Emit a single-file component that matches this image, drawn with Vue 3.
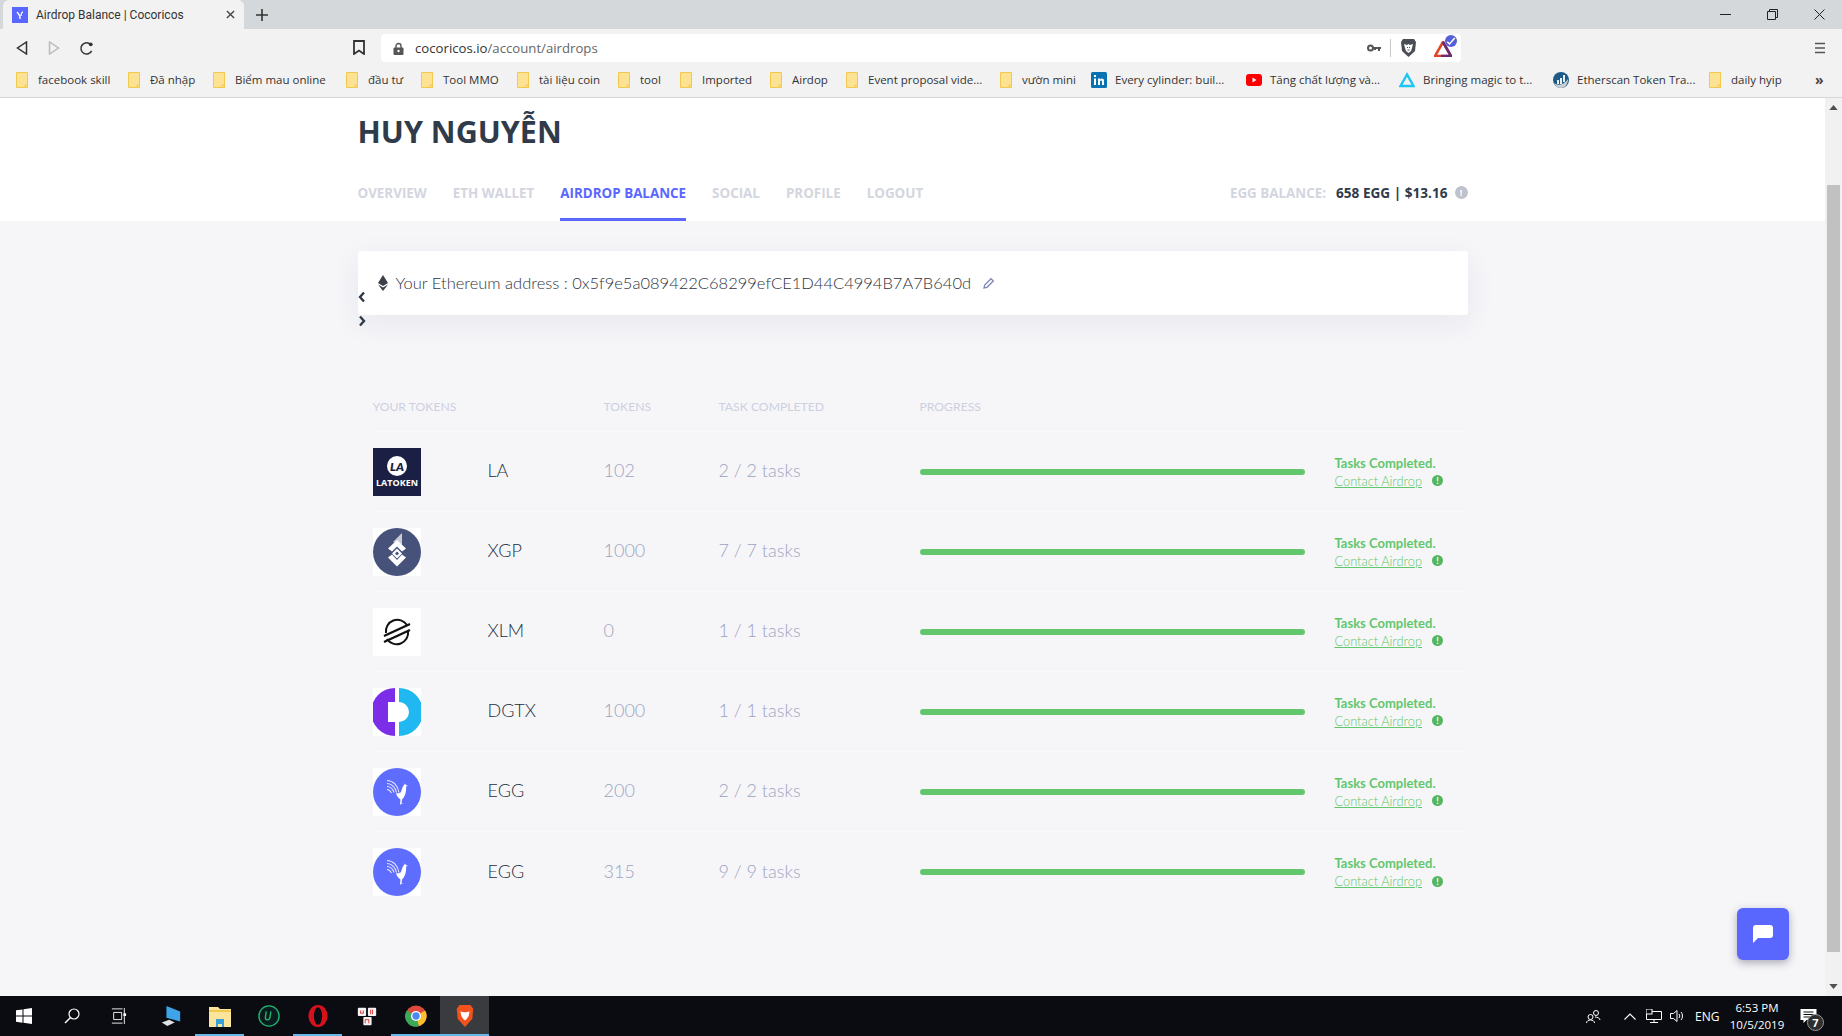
<script setup>
const bookmarks = [
  { label: 'facebook skill', width: 112 },
  { label: 'Đã nhập', width: 85 },
  { label: 'Biểm mau online', width: 133 },
  { label: 'đầu tư', width: 75 },
  { label: 'Tool MMO', width: 96 },
  { label: 'tài liệu coin', width: 101 },
  { label: 'tool', width: 62 },
  { label: 'Imported', width: 90 },
  { label: 'Airdop', width: 76 },
  { label: 'Event proposal vide...', width: 154 },
  { label: 'vườn mini', width: 91 },
  { label: 'Every cylinder: buil...', width: 155, icon: 'in' },
  { label: 'Tăng chất lượng và...', width: 153, icon: 'yt' },
  { label: 'Bringing magic to t...', width: 154, icon: 'tri' },
  { label: 'Etherscan Token Tra...', width: 156, icon: 'eth' },
  { label: 'daily hyip', width: 90 }
]

const tabs = [
  { label: 'OVERVIEW' },
  { label: 'ETH WALLET' },
  { label: 'AIRDROP BALANCE', active: true },
  { label: 'SOCIAL' },
  { label: 'PROFILE' },
  { label: 'LOGOUT' }
]

const rows = [
  { logo: 'la', name: 'LA', tokens: '102', tasks: '2 / 2 tasks' },
  { logo: 'xgp', name: 'XGP', tokens: '1000', tasks: '7 / 7 tasks' },
  { logo: 'xlm', name: 'XLM', tokens: '0', tasks: '1 / 1 tasks' },
  { logo: 'dgtx', name: 'DGTX', tokens: '1000', tasks: '1 / 1 tasks' },
  { logo: 'egg', name: 'EGG', tokens: '200', tasks: '2 / 2 tasks' },
  { logo: 'egg', name: 'EGG', tokens: '315', tasks: '9 / 9 tasks' }
]
</script>

<template>
  <div class="screen">
    <!-- tab strip -->
    <div class="tabstrip">
      <div class="tab">
        <svg class="favicon" viewBox="0 0 16 16">
          <rect width="16" height="16" fill="#5a67ff" />
          <path d="M5 5c1 1 2 2 3 5l0 2M11 5c-1 0-2 2-2 4" stroke="#fff" stroke-width="1.4" fill="none" />
        </svg>
        <span class="tab-title">Airdrop Balance | Cocoricos</span>
        <svg class="tab-close" viewBox="0 0 10 10"><path d="M1 1l8 8M9 1l-8 8" stroke="#444" stroke-width="1.5" /></svg>
      </div>
      <svg class="tab-plus" viewBox="0 0 12 12"><path d="M6 0v12M0 6h12" stroke="#333" stroke-width="1.6" /></svg>
      <div class="win-controls">
        <svg viewBox="0 0 11 11"><path d="M0 5.5h11" stroke="#222" /></svg>
        <svg viewBox="0 0 11 11"><path d="M.5 2.5h8v8h-8zM2.5 2.5v-2h8v8h-2" stroke="#222" fill="none" /></svg>
        <svg viewBox="0 0 11 11"><path d="M.5.5l10 10M10.5.5l-10 10" stroke="#222" /></svg>
      </div>
    </div>

    <!-- toolbar -->
    <div class="toolbar">
      <div class="nav-buttons">
        <svg viewBox="0 0 12 14"><path d="M10.5 1v12L1.5 7z" fill="none" stroke="#333" stroke-width="1.5" /></svg>
        <svg viewBox="0 0 12 14"><path d="M1.5 1v12L10.5 7z" fill="none" stroke="#bbb" stroke-width="1.5" /></svg>
        <svg viewBox="0 0 16 16"><path d="M13.5 10.5A6 6 0 1 1 11.5 3" fill="none" stroke="#333" stroke-width="1.6" /><circle cx="12.5" cy="3.5" r="2" fill="#333" /></svg>
      </div>
      <svg class="bookmark-btn" viewBox="0 0 12 15"><path d="M1 1h10v13L6 10.5 1 14z" fill="none" stroke="#333" stroke-width="1.8" /></svg>
      <div class="omnibox">
        <svg class="lock" viewBox="0 0 11 13"><path d="M3 6V4a2.5 2.5 0 0 1 5 0v2" fill="none" stroke="#555" stroke-width="1.4" /><rect x=".5" y="5.5" width="10" height="7.5" rx="1" fill="#555" /><circle cx="5.5" cy="9" r="1.2" fill="#fff" /></svg>
        <span class="url">cocoricos.io<span class="url-path">/account/airdrops</span></span>
        <svg class="key" viewBox="0 0 14 8"><circle cx="3.5" cy="4" r="2.5" fill="none" stroke="#555" stroke-width="2" /><path d="M6 3h8v2h-1v2h-2V5H9v1H7V5H6z" fill="#555" /></svg>
        <i class="omni-sep"></i>
        <svg class="shield" viewBox="0 0 17 20">
          <path d="M3 1h11l2 3-1 9-6.500 6L2 13 1 4z" fill="#4a4d55" />
          <path d="M4 6l3 1 1.500-1L10 7l3-1-1 4-1 3-2.500 2L6 13l-1-3z" fill="#fff" />
          <path d="M7 9.500h1M9 9.500h1M7.500 12h2" stroke="#4a4d55" stroke-width="1" />
        </svg>
        <div class="bat">
          <svg viewBox="0 0 18 16">
            <path d="M9 1 1 15h16z" fill="#fff" stroke="#e2452a" stroke-width="2.600" />
            <path d="M9 1l8 14H7" fill="none" stroke="#662d73" stroke-width="2.600" />
          </svg>
          <span class="bat-badge">
            <svg viewBox="0 0 8 8"><path d="M1.500 4.500 3 6l3.500-4" stroke="#fff" fill="none" /></svg>
          </span>
        </div>
      </div>
      <svg class="menu-btn" viewBox="0 0 10 12"><path d="M0 1.500h10M0 6h10M0 10.500h10" stroke="#555" stroke-width="1.500" /></svg>
    </div>

    <!-- bookmarks bar -->
    <div class="bookmarks">
      <div v-for="b in bookmarks" :key="b.label" class="bm" :style="{ width: b.width + 'px' }">
        <svg v-if="!b.icon" class="bm-icon" viewBox="0 0 12 16">
          <path d="M.5.500h11v15H.500z" fill="#fde293" stroke="#f2c94c" />
          <path d="M9 13h2.500v2.500H9z" fill="none" stroke="#f2c94c" />
        </svg>
        <svg v-else-if="b.icon === 'in'" class="bm-icon wide" viewBox="0 0 16 16">
          <rect width="16" height="16" rx="1.500" fill="#0a71b3" />
          <path d="M3 6.500h2V13H3zM3 3h2v2H3zM7 6.500h2v1c1-1.500 4-1.500 4 1.500v4h-2V9.500c0-1.500-2-1.500-2 0V13H7z" fill="#fff" />
        </svg>
        <svg v-else-if="b.icon === 'yt'" class="bm-icon wide" viewBox="0 0 16 16">
          <rect y="2" width="16" height="12" rx="3" fill="#f00" />
          <path d="M6.500 5.500v5l4-2.500z" fill="#fff" />
        </svg>
        <svg v-else-if="b.icon === 'tri'" class="bm-icon wide" viewBox="0 0 16 16">
          <path d="M8 2.500 1.500 14h13z" fill="none" stroke="#1cc6f4" stroke-width="2.400" />
        </svg>
        <svg v-else class="bm-icon wide" viewBox="0 0 16 16">
          <circle cx="8" cy="8" r="8" fill="#1d5a87" />
          <path d="M1 11c4 3 10 2 14-4 0 5-3 9-7 9-3 0-6-2-7-5z" fill="#c9ced3" />
          <path d="M5 8v4M8 6v6M11 3v7" stroke="#fff" stroke-width="1.800" />
        </svg>
        <span class="bm-label">{{ b.label }}</span>
      </div>
      <span class="bm-more">»</span>
    </div>

    <!-- page -->
    <div class="viewport">
      <div class="page">
        <header class="page-header">
          <div class="container">
            <h1>HUY NGUYỄN</h1>
            <div class="header-row">
              <nav class="tabs">
                <a v-for="t in tabs" :key="t.label" :class="{ active: t.active }">{{ t.label }}</a>
              </nav>
              <div class="balance">
                <span class="balance-label">EGG BALANCE:</span>
                <span class="balance-value">658 EGG | $13.16</span>
                <span class="info-dot">!</span>
              </div>
            </div>
          </div>
        </header>

        <main class="container">
          <div class="address-card">
            <svg class="eth-icon" viewBox="0 0 10 16">
              <path d="M5 0 0 8l5 3 5-3z" fill="#3c3f48" />
              <path d="M0 9.500 5 16l5-6.500-5 3z" fill="#3c3f48" />
            </svg>
            <span>Your Ethereum address : 0x5f9e5a089422C68299efCE1D44C4994B7A7B640d</span>
            <svg class="pencil" viewBox="0 0 12 12"><path d="M1 11l.7-3L8 1.700 10.300 4 4 10.300z" fill="none" stroke="#7d88b5" stroke-width="1.300" /></svg>
            <svg class="chev chev-prev" viewBox="0 0 8 12"><path d="M6 1.500 2 6l4 4.500" fill="none" stroke="#2f3a4a" stroke-width="2.400" /></svg>
            <svg class="chev chev-next" viewBox="0 0 8 12"><path d="M2 1.500 6 6l-4 4.500" fill="none" stroke="#2f3a4a" stroke-width="2.400" /></svg>
          </div>

          <div class="table">
            <div class="table-head grid">
              <span>YOUR TOKENS</span>
              <span></span>
              <span>TOKENS</span>
              <span>TASK COMPLETED</span>
              <span>PROGRESS</span>
              <span></span>
            </div>
            <div v-for="(r, i) in rows" :key="i" class="table-row grid">
              <div class="logo">
                <svg v-if="r.logo === 'la'" viewBox="0 0 48 48">
                  <rect width="48" height="48" fill="#1b1f43" />
                  <circle cx="24" cy="18" r="10" fill="#fff" />
                  <text x="24" y="22.500" text-anchor="middle" class="la-mark">LA</text>
                  <text x="24" y="37.500" text-anchor="middle" class="la-text">LATOKEN</text>
                </svg>
                <svg v-else-if="r.logo === 'xgp'" viewBox="0 0 48 48">
                  <rect width="48" height="48" fill="#fff" />
                  <circle cx="24" cy="24" r="24" fill="#46527a" />
                  <path d="M29 5v12l-9-3z" fill="#c9ccd6" />
                  <path d="M24 12l9 8.500-4 3-5-5-5 5-4-3z" fill="#fff" />
                  <path d="M24 20.500l5 5-5 5-5-5zM24 23.500l-2 2 2 2 2-2z" fill="#fff" fill-rule="evenodd" />
                  <path d="M15 29.500l4-3 5 5.500 5-5.500 4 3-9 9z" fill="#fff" />
                </svg>
                <svg v-else-if="r.logo === 'xlm'" viewBox="0 0 48 48">
                  <rect width="48" height="48" fill="#fff" />
                  <path d="M34 17a11.500 11.500 0 0 0-21 8M14 31a11.500 11.500 0 0 0 21-8" fill="none" stroke="#111" stroke-width="2" />
                  <path d="M11 28l26-12M11 34l26-12" stroke="#111" stroke-width="2.400" />
                </svg>
                <svg v-else-if="r.logo === 'dgtx'" viewBox="0 0 48 48">
                  <rect width="48" height="48" fill="#fff" />
                  <path d="M22 0v14h-7v20h7v14A24 24 0 0 1 22 0z" fill="#7b2de8" />
                  <path d="M26 0a24 24 0 0 1 0 48V34a10 10 0 0 0 0-20z" fill="#1fb8f0" />
                </svg>
                <svg v-else viewBox="0 0 48 48">
                  <rect width="48" height="48" fill="#fff" />
                  <circle cx="24" cy="24" r="24" fill="#5f6dff" />
                  <g fill="none" stroke="#fff" stroke-width="1.100" opacity=".85">
                    <path d="M14 12.500c6 0 11 5 12 12" />
                    <path d="M14 15.500c4.500 0 8.500 4 9.500 9" />
                    <path d="M14 18.500c3 0 6 2.500 7 6" />
                    <path d="M14 21.500c2 0 3.500 1.500 4.500 3.500" />
                  </g>
                  <path d="M23 25c2 .5 4 .5 5-1 1-2 1-5 3-7l1-1.500 1 1.500 2 1-2 .5c.5 4-.5 10-4 13l-.5 4h2l-3.500 1 .5-5c-2-1.500-4-3.500-4.500-6.500z" fill="#fff" />
                </svg>
              </div>
              <span class="token-name">{{ r.name }}</span>
              <span class="token-num">{{ r.tokens }}</span>
              <span class="token-num">{{ r.tasks }}</span>
              <div class="progress"><i></i></div>
              <div class="status">
                <strong>Tasks Completed.</strong>
                <div class="contact"><a>Contact Airdrop</a><span class="ok-dot">!</span></div>
              </div>
            </div>
          </div>
        </main>
      </div>

      <div class="scrollbar">
        <svg viewBox="0 0 10 6"><path d="M5 0l5 6H0z" fill="#505050" /></svg>
        <div class="scroll-track"><div class="scroll-thumb"></div></div>
        <svg viewBox="0 0 10 6"><path d="M5 6l5-6H0z" fill="#505050" /></svg>
      </div>

      <button class="chat">
        <svg viewBox="0 0 20 18"><path d="M3 0h14a3 3 0 0 1 3 3v7a3 3 0 0 1-3 3H5l-5 5V3a3 3 0 0 1 3-3z" fill="#fff" /></svg>
      </button>
    </div>

    <!-- taskbar -->
    <footer class="taskbar">
      <div class="task-slot sys">
        <svg viewBox="0 0 16 16"><path d="M0 2.300 6.500 1.400v6.200H0zM7.500 1.300 16 0v7.600H7.500zM0 8.500h6.500v6.200L0 13.800zM7.500 8.500H16V16l-8.500-1.200z" fill="#fff" /></svg>
      </div>
      <div class="task-slot sys">
        <svg viewBox="0 0 16 16"><circle cx="10" cy="6" r="5" fill="none" stroke="#fff" stroke-width="1.200" /><path d="M6.500 9.500 1 15" stroke="#fff" stroke-width="1.500" /></svg>
      </div>
      <div class="task-slot sys">
        <svg viewBox="0 0 16 18"><path d="M0 1h12M0 17h12M2 5h9v8H2zM14 0v18" stroke="#fff" fill="none" /><rect x="13" y="6" width="3" height="3" fill="#fff" /></svg>
      </div>
      <div class="task-slot app">
        <svg viewBox="0 0 24 24"><path d="M7 1l15 6v11L7 14z" fill="#3ea3e8" /><path d="M2 19l8-3 6 3-8 4z" fill="#dfe3e8" /></svg>
      </div>
      <div class="task-slot app running">
        <svg viewBox="0 0 22 22"><path d="M0 2h9l2 2h11v18H0z" fill="#fbe59a" /><path d="M0 5h22v2H0z" fill="#f0c94e" /><path d="M7 14h8v8h-2v-3H9v3H7z" fill="#3aa0da" /></svg>
      </div>
      <div class="task-slot app">
        <svg viewBox="0 0 24 24"><circle cx="12" cy="12" r="11" fill="#0b1a1c" stroke="#21b573" stroke-width="1.500" /><path d="M9 7l-1 7c0 3 4 3 5 0l1-7" fill="none" stroke="#21b573" stroke-width="1.500" /></svg>
      </div>
      <div class="task-slot app running">
        <svg viewBox="0 0 24 24"><ellipse cx="12" cy="12" rx="10.500" ry="12" fill="#d7111e" /><ellipse cx="12" cy="12" rx="4.500" ry="9.500" fill="#0a0c11" /></svg>
      </div>
      <div class="task-slot app">
        <svg viewBox="0 0 24 24">
          <rect x="2" y="3" width="9" height="9" rx="1" fill="#f3f3f3" /><rect x="13" y="3" width="9" height="9" rx="1" fill="#f3f3f3" /><rect x="8" y="13" width="9" height="9" rx="1" fill="#f3f3f3" />
          <path d="M5 6v3h3V6M16 5v5M18 5v5M10 20v-4h4v4" stroke="#d33" fill="none" />
        </svg>
      </div>
      <div class="task-slot app running">
        <svg viewBox="0 0 24 24">
          <circle cx="12" cy="12" r="11.500" fill="#de4b3e" />
          <path d="M12 12 22 6a11.500 11.500 0 0 1-7 17z" fill="#fbc02d" />
          <path d="M12 12 15 23.200A11.500 11.500 0 0 1 2 6z" fill="#3ba958" />
          <circle cx="12" cy="12" r="5.500" fill="#fff" /><circle cx="12" cy="12" r="4" fill="#4a8af0" />
        </svg>
      </div>
      <div class="task-slot app active">
        <svg viewBox="0 0 20 24">
          <path d="M4 0h12l3 4-1 11-8 9-8-9L1 4z" fill="#f1531f" />
          <path d="M5 7l4 1h2l4-1-1 5-2 3-2 2-2-2-2-3z" fill="#fff" />
        </svg>
      </div>

      <div class="tray">
        <svg class="t-people" viewBox="0 0 15 15"><circle cx="10" cy="4" r="2.500" fill="none" stroke="#fff" /><circle cx="4.500" cy="8" r="2.500" fill="none" stroke="#fff" /><path d="M.5 14c0-2 2-3 4-3s4 1 4 3M9 8c2 0 5 1 5 3" fill="none" stroke="#fff" /></svg>
        <svg class="t-chevron" viewBox="0 0 12 7"><path d="M.5 6.500 6 1l5.500 5.500" fill="none" stroke="#fff" stroke-width="1.200" /></svg>
        <svg class="t-net" viewBox="0 0 16 14"><path d="M.5 2.500h15v8H.5zM8 10.500V13M4 13.500h8" fill="none" stroke="#fff" /><rect y="0" width="6" height="5" fill="#0a0c11" stroke="#fff" /></svg>
        <svg class="t-vol" viewBox="0 0 15 14"><path d="M.5 4.500h3L7 1.500v11l-3.500-3h-3z" fill="none" stroke="#fff" /><path d="M9 5a3 3 0 0 1 0 4M11 3a6 6 0 0 1 0 8" fill="none" stroke="#fff" /></svg>
        <span class="t-lang">ENG</span>
        <div class="t-clock"><span>6:53 PM</span><span>10/5/2019</span></div>
        <div class="t-notify">
          <svg viewBox="0 0 16 14"><path d="M0 0h16v11H6l-3 3v-3H0z" fill="#fff" /><path d="M3 3h10M3 5.500h10M3 8h10" stroke="#0a0c11" /></svg>
          <span class="t-badge">7</span>
        </div>
      </div>
    </footer>
  </div>
</template>

<style scoped>
.screen {
  width: 1842px;
  height: 1036px;
  display: flex;
  flex-direction: column;
  overflow: hidden;
  font-family: Lato, sans-serif;
}

/* browser chrome */
.tabstrip {
  height: 29px;
  background: #d5d8db;
  display: flex;
  align-items: flex-end;
  padding-left: 3px;
  flex-shrink: 0;
}
.tab {
  width: 241px;
  height: 29px;
  background: #f2f2f2;
  border-radius: 6px 6px 0 0;
  display: flex;
  align-items: center;
  padding-left: 9px;
  box-sizing: border-box;
}
.favicon {
  width: 16px;
  height: 16px;
}
.tab-title {
  margin-left: 8px;
  font: 12px Roboto, sans-serif;
  color: #333;
  width: 190px;
  white-space: nowrap;
}
.tab-close {
  width: 9px;
  height: 9px;
}
.tab-plus {
  width: 12px;
  height: 12px;
  margin: 0 0 8px 12px;
}
.win-controls {
  margin-left: auto;
  display: flex;
  gap: 36px;
  padding-right: 17px;
  height: 29px;
  align-items: center;
}
.win-controls svg {
  width: 11px;
  height: 11px;
}
.toolbar {
  height: 33px;
  background: #f2f2f2;
  display: flex;
  align-items: flex-end;
  flex-shrink: 0;
}
.nav-buttons {
  display: flex;
  align-items: center;
  gap: 20px;
  width: 353px;
  height: 28px;
  padding-left: 16px;
  box-sizing: border-box;
}
.nav-buttons svg {
  width: 12px;
  height: 14px;
}
.nav-buttons svg:last-child {
  width: 15px;
  height: 15px;
  margin-left: -1px;
}
.bookmark-btn {
  width: 12px;
  height: 15px;
  margin: 0 16px 7px 0;
}
.omnibox {
  width: 1080px;
  height: 28px;
  background: #fff;
  border-radius: 4px;
  display: flex;
  align-items: center;
  position: relative;
}
.lock {
  width: 11px;
  height: 13px;
  margin-left: 12px;
}
.url {
  margin-left: 11px;
  font: 13.2px "Open Sans", sans-serif;
  color: #333;
}
.url-path {
  color: #666;
}
.key {
  width: 14px;
  height: 8px;
  margin-left: auto;
}
.omni-sep {
  width: 1px;
  height: 18px;
  background: #c8c8c8;
  margin: 0 9px;
}
.shield {
  width: 17px;
  height: 20px;
}
.bat {
  position: relative;
  width: 18px;
  height: 16px;
  margin: 2px 9px 0 17px;
}
.bat svg {
  width: 18px;
  height: 16px;
  display: block;
}
.bat-badge {
  position: absolute;
  left: 11px;
  top: -6px;
  width: 12px;
  height: 12px;
  border-radius: 50%;
  background: #5560d8;
}
.bat-badge svg {
  width: 12px;
  height: 12px;
}
.menu-btn {
  width: 10px;
  height: 12px;
  margin: 0 0 8px 354px;
}
.bookmarks {
  height: 36px;
  background: #f2f2f2;
  border-bottom: 1px solid #d5d8db;
  box-sizing: border-box;
  display: flex;
  align-items: center;
  padding-left: 16px;
  flex-shrink: 0;
}
.bm {
  display: flex;
  align-items: center;
  flex-shrink: 0;
  white-space: nowrap;
}
.bm-icon {
  width: 12px;
  height: 16px;
  margin-right: 10px;
  flex-shrink: 0;
}
.bm-icon.wide {
  width: 16px;
  margin-right: 8px;
}
.bm-label {
  font: 11.5px "Open Sans", sans-serif;
  color: #333;
}
.bm-more {
  margin-left: 16px;
  font: bold 14px "Open Sans", sans-serif;
  color: #444;
}

/* page */
.viewport {
  flex: 1;
  min-height: 0;
  display: flex;
  position: relative;
  background: #f6f6f9;
}
.page {
  flex: 1;
  min-width: 0;
}
.container {
  width: 1110px;
  margin: 0 auto;
  display: block;
}
.page-header {
  height: 123px;
  background: #fff;
}
h1 {
  margin: 0;
  padding-top: 13px;
  height: 62px;
  box-sizing: border-box;
  font: 700 30.5px/40px "Open Sans", sans-serif;
  color: #2f3a4a;
}
.header-row {
  display: flex;
  justify-content: space-between;
  height: 61px;
}
.tabs {
  display: flex;
  gap: 26px;
}
.tabs a {
  height: 61px;
  box-sizing: border-box;
  padding-top: 24px;
  font: 700 13.4px/18px "Open Sans", sans-serif;
  color: #d3d6de;
}
.tabs a.active {
  color: #5a67ff;
  border-bottom: 3px solid #5a67ff;
}
.balance {
  display: flex;
  align-items: flex-start;
  padding-top: 24px;
  font: 700 13.4px/18px "Open Sans", sans-serif;
}
.balance-label {
  color: #d3d6de;
}
.balance-value {
  color: #2f3a4a;
  margin-left: 10px;
  font-size: 13.6px;
}
.info-dot {
  width: 13px;
  height: 13px;
  border-radius: 50%;
  background: #bfc2cc;
  color: #fff;
  font-size: 9px;
  line-height: 13px;
  text-align: center;
  margin: 2px 0 0 7px;
}
.address-card {
  position: relative;
  margin-top: 30px;
  height: 64px;
  background: #fff;
  border-radius: 3px;
  box-shadow: 0 8px 30px rgba(40, 40, 80, 0.07);
  display: flex;
  align-items: center;
  padding-left: 20px;
  font-size: 16.5px;
  font-weight: 300;
  color: #2f3442;
}
.eth-icon {
  width: 10px;
  height: 16px;
  margin-right: 8px;
}
.pencil {
  width: 12px;
  height: 12px;
  margin-left: 12px;
}
.chev {
  position: absolute;
  left: 0;
  width: 8px;
  height: 12px;
}
.chev-prev {
  top: 40px;
}
.chev-next {
  top: 64px;
}
.table {
  margin-top: 67px;
  padding-left: 15px;
}
.grid {
  display: grid;
  grid-template-columns: 115px 116px 115px 201px 415px 1fr;
  align-items: center;
}
.table-head {
  height: 50px;
  font-size: 12.2px;
  color: #cdd0df;
  border-bottom: 1px solid #f8f9fb;
  box-sizing: border-box;
}
.table-row {
  height: 80px;
  border-bottom: 1px solid #f8f9fb;
  box-sizing: border-box;
}
.table-row:last-child {
  border-bottom: 0;
}
.logo svg {
  width: 48px;
  height: 48px;
  display: block;
}
.la-mark {
  font: italic 800 12px Lato, sans-serif;
  fill: #1b1f43;
}
.la-text {
  font: 700 9px "Open Sans", sans-serif;
  fill: #fff;
}
.token-name {
  font-size: 18px;
  font-weight: 300;
  color: #252e3d;
  padding-bottom: 3px;
}
.token-num {
  font-size: 18px;
  font-weight: 300;
  color: #9da3c1;
  padding-bottom: 3px;
}
.progress {
  width: 385px;
  height: 6px;
  border-radius: 3px;
  background: #e9ebf1;
  overflow: hidden;
}
.progress i {
  display: block;
  width: 100%;
  height: 100%;
  background: #62c76c;
}
.status {
  font-size: 13px;
  color: #62c76c;
  line-height: 18px;
}
.status strong {
  display: block;
  font-weight: 700;
}
.contact {
  display: flex;
  align-items: center;
}
.contact a {
  text-decoration: underline;
  font-weight: 300;
  font-size: 12.8px;
}
.ok-dot {
  width: 11px;
  height: 11px;
  border-radius: 50%;
  background: #55b660;
  color: #fff;
  font-size: 9px;
  font-weight: 700;
  line-height: 11px;
  text-align: center;
  margin-left: 10px;
}
.scrollbar {
  width: 17px;
  background: #f1f1f1;
  display: flex;
  flex-direction: column;
  align-items: center;
  padding: 7px 0;
  box-sizing: border-box;
}
.scrollbar svg {
  width: 9px;
  height: 5px;
  flex-shrink: 0;
}
.scroll-track {
  flex: 1;
  width: 100%;
  display: flex;
  justify-content: center;
  padding-top: 75px;
  box-sizing: border-box;
  margin-bottom: 32px;
}
.scroll-thumb {
  width: 13px;
  background: #c1c1c1;
}
.chat {
  position: absolute;
  left: 1737px;
  top: 810px;
  width: 52px;
  height: 52px;
  border: 0;
  border-radius: 6px;
  background: #5a67ff;
  box-shadow: 0 3px 8px rgba(30, 30, 60, 0.35);
  display: flex;
  align-items: center;
  justify-content: center;
  padding: 0;
}
.chat svg {
  width: 20px;
  height: 18px;
}

/* taskbar */
.taskbar {
  height: 40px;
  background: #0a0c11;
  display: flex;
  flex-shrink: 0;
}
.task-slot {
  height: 40px;
  display: flex;
  align-items: center;
  justify-content: center;
  box-sizing: border-box;
  flex-shrink: 0;
}
.task-slot.sys {
  width: 48px;
}
.task-slot.sys:nth-child(3) {
  width: 46px;
  margin-right: 4px;
}
.task-slot.sys svg {
  width: 16px;
  height: 16px;
}
.task-slot.app {
  width: 49px;
}
.task-slot.app svg {
  width: 22px;
  height: 22px;
}
.task-slot.running {
  box-shadow: inset 0 -2px 0 #68b5ea, inset 4px 0 0 #0a0c11, inset -4px 0 0 #0a0c11;
}
.task-slot.active {
  background: #3a3b3f;
  box-shadow: inset 0 -2px 0 #68b5ea;
}
.tray {
  margin-left: auto;
  display: flex;
  align-items: center;
  color: #fff;
  font: 12px "Open Sans", sans-serif;
  padding-right: 25px;
}
.t-people {
  width: 15px;
  height: 15px;
}
.t-chevron {
  width: 12px;
  height: 7px;
  margin-left: 23px;
}
.t-net {
  width: 16px;
  height: 14px;
  margin-left: 10px;
}
.t-vol {
  width: 15px;
  height: 14px;
  margin-left: 8px;
}
.t-lang {
  margin-left: 10px;
  width: 28px;
}
.t-clock {
  display: flex;
  flex-direction: column;
  align-items: center;
  width: 56px;
  margin-left: 6px;
  line-height: 17px;
  font-size: 11.500px;
}
.t-notify {
  position: relative;
  width: 17px;
  height: 14px;
  margin-left: 15px;
}
.t-notify svg {
  width: 17px;
  height: 14px;
  display: block;
}
.t-badge {
  position: absolute;
  left: 7px;
  top: 5px;
  width: 17px;
  height: 17px;
  border-radius: 50%;
  background: #2e2e2e;
  border: 1px solid #999;
  box-sizing: border-box;
  font-size: 11px;
  font-weight: 700;
  line-height: 15px;
  text-align: center;
}
</style>
